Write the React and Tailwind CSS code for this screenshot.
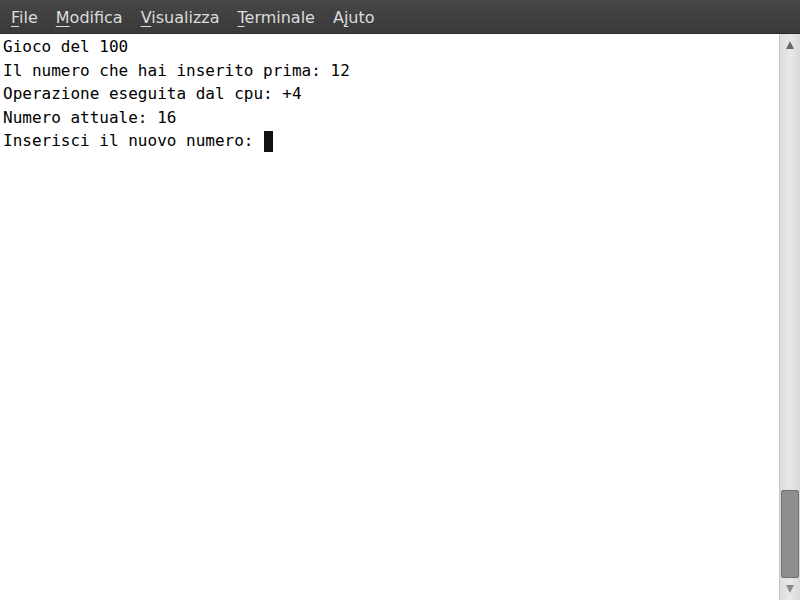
import React from "react";

const lines = [
  "Gioco del 100",
  "Il numero che hai inserito prima: 12",
  "Operazione eseguita dal cpu: +4",
  "Numero attuale: 16",
];

const MenuItem = ({ first, rest }) => (
  <span className="px-[9px]">
    <span className="underline underline-offset-[3px] decoration-1">{first}</span>
    {rest}
  </span>
);

export default function App() {
  return (
    <div className="w-[800px] h-[600px] flex flex-col bg-white overflow-hidden">
      <div className="h-[34px] flex items-center px-[2px] pt-[3px] bg-gradient-to-b from-[#464646] to-[#3a3a3a] border-b border-[#2a2a2a] text-[#dcdcdc] text-[16px] font-['DejaVu_Sans',sans-serif]">
        <MenuItem first="F" rest="ile" />
        <MenuItem first="M" rest="odifica" />
        <MenuItem first="V" rest="isualizza" />
        <MenuItem first="T" rest="erminale" />
        <span className="px-[9px]">
          A<span className="underline underline-offset-[3px] decoration-1">j</span>uto
        </span>
      </div>
      <div className="flex-1 flex min-h-0">
        <div className="flex-1 pl-[3px] pt-[1px] font-['DejaVu_Sans_Mono',monospace] text-[16px] leading-[23.6px] text-black">
          {lines.map((l) => (
            <div key={l} className="whitespace-pre">{l}</div>
          ))}
          <div className="flex items-center whitespace-pre">
            Inserisci il nuovo numero:{" "}
            <span className="inline-block w-[9px] h-[21px] ml-[1px] bg-[#111]" />
          </div>
        </div>
        <div className="w-[21px] flex flex-col bg-gradient-to-r from-[#dcdcdc] via-[#e8e8e8] to-[#d8d8d8] border-l border-[#c8c8c8]">
          <div className="h-[22px] flex items-center justify-center">
            <svg width="10" height="10" viewBox="0 0 10 10">
              <path d="M5 1 L9 9 L1 9 Z" fill="#6a6a6a" />
            </svg>
          </div>
          <div className="flex-1" />
          <div className="h-[88px] mx-[1px] rounded-[2px] bg-[#8e8e8e] border border-[#707070]" />
          <div className="h-[22px] flex items-center justify-center">
            <svg width="10" height="10" viewBox="0 0 10 10">
              <path d="M1 1 L9 1 L5 9 Z" fill="#8a8a8a" />
            </svg>
          </div>
        </div>
      </div>
    </div>
  );
}
